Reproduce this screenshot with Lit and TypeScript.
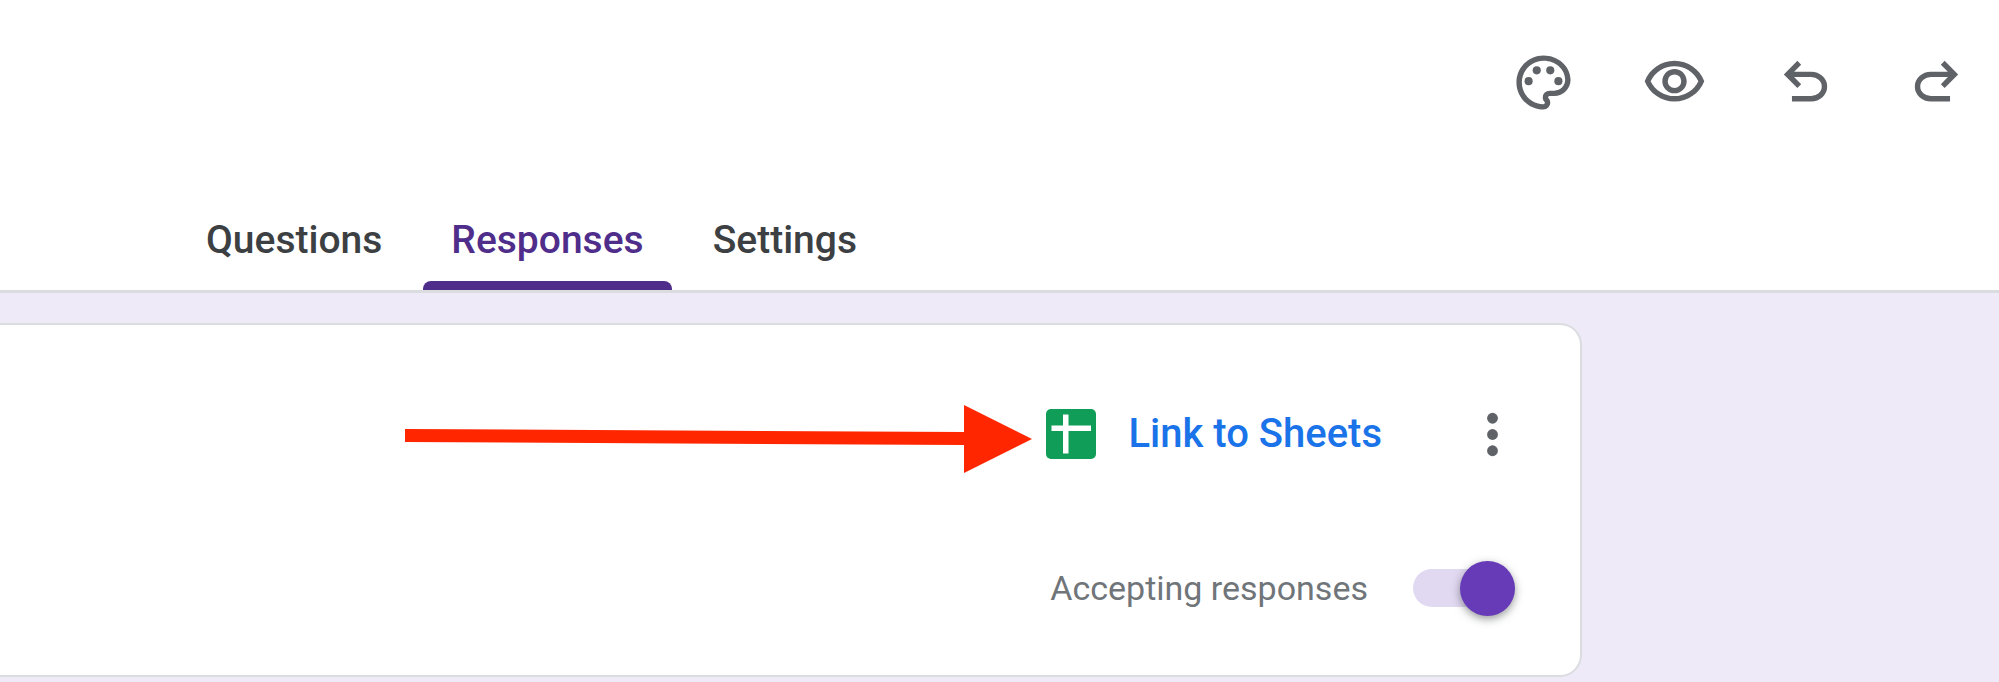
import { LitElement, html, css, svg } from "lit";
import { customElement, property, state } from "lit/decorators.js";

const icons: Record<string, ReturnType<typeof svg>> = {
  palette: svg`
    <path fill-rule="evenodd" d="M12 22C6.49 22 2 17.51 2 12S6.49 2 12 2s10 4.04 10 9c0 3.31-2.69 6-6 6h-1.77c-.28 0-.5.22-.5.5 0 .12.05.23.13.33.41.47.64 1.06.64 1.67A2.5 2.5 0 0 1 12 22zm0-18c-4.41 0-8 3.59-8 8s3.59 8 8 8c.28 0 .5-.22.5-.5a.54.54 0 0 0-.14-.35c-.41-.46-.63-1.05-.63-1.65a2.5 2.5 0 0 1 2.5-2.5H16c2.21 0 4-1.79 4-4 0-3.86-3.59-7-8-7z"/>
    <circle cx="6.5" cy="11.5" r="1.5"/><circle cx="9.5" cy="7.5" r="1.5"/>
    <circle cx="14.5" cy="7.5" r="1.5"/><circle cx="17.5" cy="11.5" r="1.5"/>`,
  eye: svg`<path d="M12 6c3.79 0 7.17 2.13 8.82 5.5C19.17 14.87 15.79 17 12 17s-7.17-2.13-8.82-5.5C4.83 8.13 8.21 6 12 6m0-2C7 4 2.73 7.11 1 11.5 2.73 15.89 7 19 12 19s9.27-3.11 11-7.5C21.27 7.11 17 4 12 4zm0 5a2.5 2.5 0 0 1 0 5 2.5 2.5 0 0 1 0-5m0-2c-2.48 0-4.5 2.02-4.5 4.5S9.52 16 12 16s4.5-2.02 4.5-4.5S14.48 7 12 7z"/>`,
  undo: svg`<path d="M7 19v-2h7.1q1.575 0 2.738-1T18 13.5 16.838 11 14.1 10H7.8l2.6 2.6L9 14 4 9l5-5 1.4 1.4L7.8 8h6.3q2.425 0 4.163 1.575T20 13.5t-1.737 3.925T14.1 19z"/>`,
  redo: svg`<path transform="matrix(-1 0 0 1 24 0)" d="M7 19v-2h7.1q1.575 0 2.738-1T18 13.5 16.838 11 14.1 10H7.8l2.6 2.6L9 14 4 9l5-5 1.4 1.4L7.8 8h6.3q2.425 0 4.163 1.575T20 13.5t-1.737 3.925T14.1 19z"/>`,
  more: svg`<circle cx="12" cy="6" r="2"/><circle cx="12" cy="12" r="2"/><circle cx="12" cy="18" r="2"/>`,
};

@customElement("icon-button")
class IconButton extends LitElement {
  @property() icon = "";
  @property() label = "";

  static styles = css`
    :host { display: block; }
    .button {
      display: flex; align-items: center; justify-content: center;
      width: 100%; height: 100%; padding: 0; border: 0; border-radius: 50%;
      background: none; color: #5f6368; cursor: pointer;
    }
    .glyph { display: block; width: 65px; height: 65px; fill: currentColor; flex: none; }
  `;

  render() {
    return html`<button class="button" type="button" aria-label=${this.label}>
      <svg class="glyph" viewBox="0 0 24 24" aria-hidden="true">${icons[this.icon]}</svg>
    </button>`;
  }
}

@customElement("app-root")
class AppRoot extends LitElement {
  @state() active = "Responses";
  @state() accepting = true;

  static styles = css`
    :host {
      display: flex; flex-direction: column; min-height: 100vh;
      background: #eeeaf8;
      font-family: Roboto, "Liberation Sans", sans-serif;
    }
    .header { background: #fff; border-bottom: 3px solid #dadce0; padding-top: 28px; }
    .toolbar { display: flex; justify-content: flex-end; gap: 23px; padding-right: 9px; }
    .tool { width: 108px; height: 108px; }
    .tabs { display: flex; gap: 13px; margin-top: 24px; padding-left: 178px; }
    .tab {
      position: relative; padding: 56px 28px 26px; border: 0; background: none;
      font: 500 39px/48px Roboto, "Liberation Sans", sans-serif;
      color: #3c4043; cursor: pointer;
    }
    .tab.active { color: #4f2d8b; }
    .tab.active::after {
      content: ""; position: absolute; left: 0; right: 0; bottom: 0;
      height: 9px; border-radius: 8px 8px 0 0; background: #4f2d8b;
    }
    .card {
      position: relative; display: flex; flex-direction: column; gap: 94px;
      margin: 30px 417px 0 0; padding: 77px 56px 59px 0;
      background: #fff; border: 2px solid #dadce0; border-left: 0;
      border-radius: 0 22px 22px 0;
    }
    .row { display: flex; align-items: center; justify-content: flex-end; }
    .link {
      display: flex; align-items: center; gap: 32px; margin-right: 78px;
      padding: 0; border: 0; background: none; color: #1a73e8; cursor: pointer;
      font: 500 40px/48px Roboto, "Liberation Sans", sans-serif;
    }
    .sheets { display: block; width: 50px; height: 50px; }
    .more { width: 64px; height: 64px; }
    .accepting { gap: 45px; padding-right: 9px; font-size: 34px; line-height: 56px; color: #70757a; }
    .switch {
      appearance: none; display: flex; align-items: center; justify-content: flex-start;
      width: 102px; height: 38px; margin: 0; cursor: pointer;
      background: #e1d8f1; border-radius: 19px;
    }
    .switch::before {
      content: ""; flex: none; width: 55px; height: 55px; border-radius: 50%;
      background: #fff; box-shadow: 0 3px 8px #3c404388;
    }
    .switch:checked { justify-content: flex-end; }
    .switch:checked::before { background: #673ab7; }
    .arrow {
      position: absolute; right: 547px; top: 79px; width: 630px; height: 70px;
      pointer-events: none;
    }
  `;

  render() {
    return html`
      <header class="header">
        <div class="toolbar">
          <icon-button class="tool" icon="palette" label="Customize theme"></icon-button>
          <icon-button class="tool" icon="eye" label="Preview"></icon-button>
          <icon-button class="tool" icon="undo" label="Undo"></icon-button>
          <icon-button class="tool" icon="redo" label="Redo"></icon-button>
        </div>
        <nav class="tabs" role="tablist">
          ${["Questions", "Responses", "Settings"].map(
            (name) => html`<button
              type="button" role="tab"
              class="tab ${name === this.active ? "active" : ""}"
              aria-selected=${name === this.active}
              @click=${() => (this.active = name)}
            >${name}</button>`
          )}
        </nav>
      </header>
      <main class="card">
        <div class="row">
          <button class="link" type="button">
            <svg class="sheets" viewBox="0 0 50 50" aria-hidden="true">
              <rect width="50" height="50" rx="5" fill="#0f9d58"/>
              <path d="M17 5.5h5.500v11H45V22H22.500v22.500H17V22H5.500v-5.500H17z" fill="#fff"/>
            </svg>
            Link to Sheets
          </button>
          <icon-button class="more" icon="more" label="More options"></icon-button>
        </div>
        <div class="row accepting">
          <label for="accepting">Accepting responses</label>
          <input id="accepting" class="switch" type="checkbox" role="switch"
            .checked=${this.accepting}
            @change=${(e: Event) => (this.accepting = (e.target as HTMLInputElement).checked)} />
        </div>
        <svg class="arrow" viewBox="0 0 630 70" aria-hidden="true">
          <path d="M2 25L561 28V1L629 35L561 69V41L2 38z" fill="#ff2600"/>
        </svg>
      </main>
    `;
  }
}
